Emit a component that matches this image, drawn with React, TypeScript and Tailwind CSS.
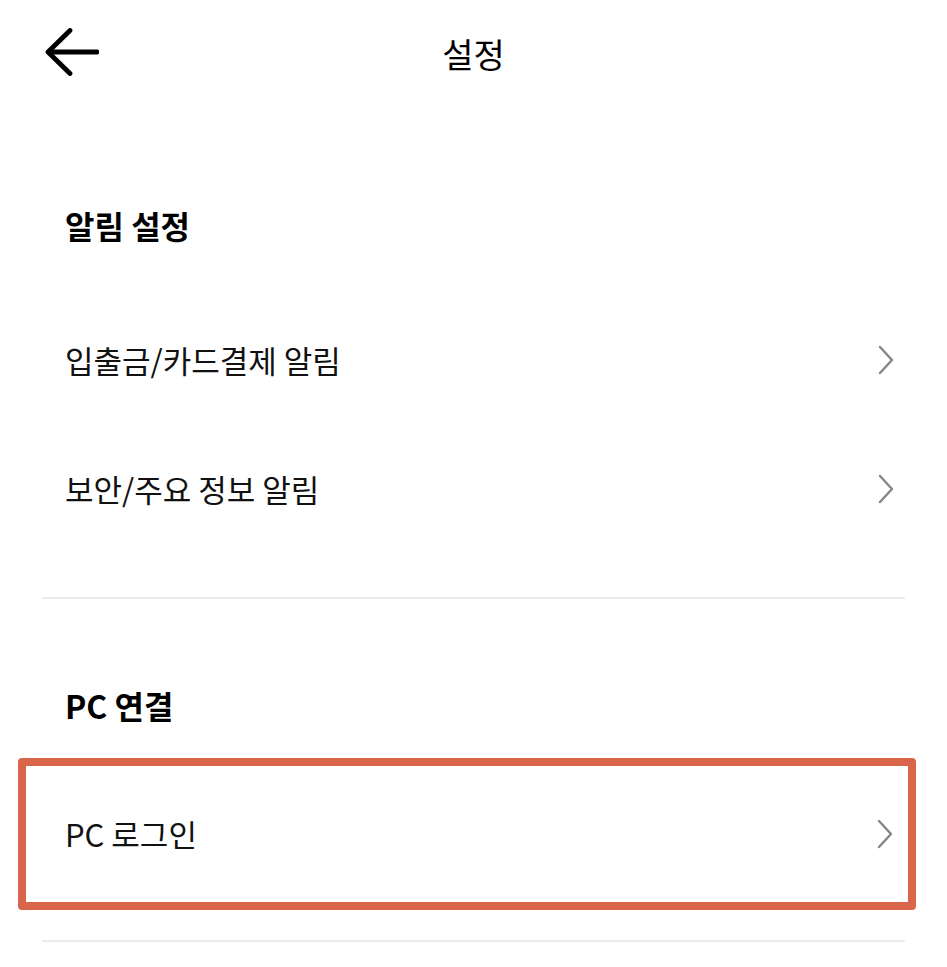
import React from 'react';

const font = { fontFamily: '"Noto Sans CJK KR", "Noto Sans", sans-serif' };

const Chevron: React.FC = () => (
  <svg width="16" height="30" viewBox="0 0 16 30" fill="none">
    <path d="M2 2 L14 15 L2 28" stroke="#858585" strokeWidth="2.4" strokeLinecap="round" strokeLinejoin="round" />
  </svg>
);

const Row: React.FC<{ label: string }> = ({ label }) => (
  <div className="h-[129px] flex items-center justify-between pl-[65px] pr-[53px]">
    <span className="text-[31px] leading-[40px] text-[#111]">{label}</span>
    <Chevron />
  </div>
);

const App: React.FC = () => {
  return (
    <div className="w-[947px] h-[967px] bg-white overflow-hidden" style={font}>
      {/* Header */}
      <div className="relative h-[108px] flex items-center justify-center">
        <button className="absolute left-[45px] top-[28px]">
          <svg width="54" height="48" viewBox="0 0 54 48" fill="none">
            <path d="M52 24 H4" stroke="#000" strokeWidth="4.8" strokeLinecap="round" />
            <path d="M25 2.5 L3 24 L25 45.5" stroke="#000" strokeWidth="4.8" strokeLinecap="round" strokeLinejoin="round" />
          </svg>
        </button>
        <h1 className="text-[34px] leading-[40px] text-black">설정</h1>
      </div>

      {/* 알림 설정 */}
      <div className="mt-[97px] h-[40px] pl-[65px] text-[32px] leading-[40px] font-bold text-black">알림 설정</div>
      <div className="mt-[50px]">
        <Row label="입출금/카드결제 알림" />
        <Row label="보안/주요 정보 알림" />
      </div>

      <div className="mt-[44px] mx-[42px] h-[2px] bg-[#ebebeb]" />

      {/* PC 연결 */}
      <div className="mt-[86px] h-[40px] pl-[65px] text-[32px] leading-[40px] font-bold text-black">PC 연결</div>

      <div className="mt-[33px] ml-[18px] mr-[31px] h-[152px] border-[8px] border-[#d9664a] rounded-[4px] flex items-center justify-between pl-[39px] pr-[15px]">
        <span className="text-[31px] leading-[40px] text-[#111]">PC 로그인</span>
        <Chevron />
      </div>

      <div className="mt-[30px] mx-[42px] h-[2px] bg-[#ebebeb]" />
    </div>
  );
};

export default App;
